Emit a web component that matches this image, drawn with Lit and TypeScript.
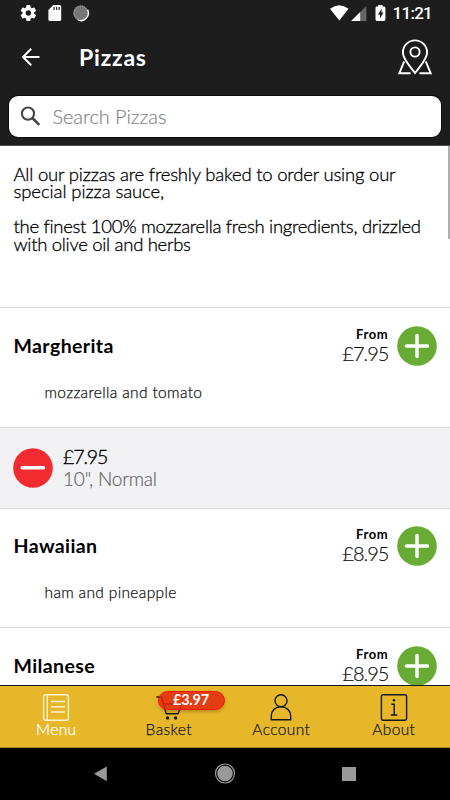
import { LitElement, html, css, svg } from "lit";
import { customElement, property } from "lit/decorators.js";

const plus = svg`<svg class="round" width="40" height="40" viewBox="0 0 40 40"><circle cx="20" cy="20" r="19.8" fill="#69ac35"/><path d="M9.5 20H30.5M20 9.5V30.5" stroke="#fff" stroke-width="3.4" stroke-linecap="round"/></svg>`;
const minus = svg`<svg class="round" width="40" height="40" viewBox="0 0 40 40"><circle cx="20" cy="20" r="19.8" fill="#f22b30"/><path d="M9.3 19.8H30.5" stroke="#fff" stroke-width="3.6" stroke-linecap="round"/></svg>`;

@customElement("status-bar")
class StatusBar extends LitElement {
  static styles = css`
    :host { display: flex; height: 28px; color: #fff; }
    svg { display: block; }
    .time { position: absolute; right: 18px; top: 3px; font: 500 17px/21px Roboto, sans-serif; letter-spacing: -0.75px; }
  `;
  render() {
    return html`
      <svg width="450" height="28" viewBox="0 0 450 28" fill="#fff">
        <g transform="translate(18.9 3.5) scale(.79)"><path d="M19.43 12.98c.04-.32.07-.64.07-.98s-.03-.66-.07-.98l2.11-1.65c.19-.15.24-.42.12-.64l-2-3.46c-.12-.22-.39-.3-.61-.22l-2.49 1c-.52-.4-1.08-.73-1.69-.98l-.38-2.65C14.46 2.18 14.25 2 14 2h-4c-.25 0-.46.18-.49.42l-.38 2.65c-.61.25-1.17.59-1.69.98l-2.49-1c-.23-.09-.49 0-.61.22l-2 3.46c-.13.22-.07.49.12.64l2.11 1.65c-.04.32-.07.65-.07.98s.03.66.07.98l-2.11 1.65c-.19.15-.24.42-.12.64l2 3.46c.12.22.39.3.61.22l2.49-1c.52.4 1.08.73 1.69.98l.38 2.65c.03.24.24.42.49.42h4c.25 0 .46-.18.49-.42l.38-2.65c.61-.25 1.17-.59 1.69-.98l2.49 1c.23.09.49 0 .61-.22l2-3.46c.12-.22.07-.49-.12-.64l-2.11-1.65zM12 15.5c-1.93 0-3.5-1.57-3.5-3.5s1.57-3.5 3.5-3.5 3.5 1.57 3.5 3.5-1.57 3.5-3.5 3.5z"/></g>
        <path d="M53.4 5H59.6Q61.2 5 61.2 6.6V19.4Q61.2 21 59.6 21H50Q48.4 21 48.4 19.4V10Z"/>
        <path d="M54 7v3M56.7 7v3M59.2 7v3" stroke="#1d1d1d" stroke-width="1.2"/>
        <circle cx="80.8" cy="13" r="7.5" fill="#777"/>
        <circle cx="80.8" cy="13" r="6.8" fill="none" stroke="#999" stroke-width="1.4" stroke-dasharray="1 1.2"/>
        <path d="M87.6 9.6A7.6 7.6 0 0 1 77.8 20" fill="none" stroke="#fff" stroke-width="1.3"/>
        <path d="M330 8.8Q339.3 1.6 348.6 8.8L339.3 20.6Z"/>
        <path d="M366.4 6V21H351.2Z" fill="#666"/><path d="M360.2 12V21H351.2Z"/>
        <path d="M378.2 5H382.6V6.6H384Q385.4 6.6 385.4 8V19.6Q385.4 21 384 21H377Q375.5 21 375.5 19.6V8Q375.5 6.6 377 6.6H378.2Z"/>
        <path d="M381.8 8.6L377.9 14.4H380V18.6L383.4 12.6H381.4Z" fill="#1d1d1d"/>
      </svg>
      <span class="time">11:21</span>`;
  }
}

@customElement("menu-item")
class MenuItem extends LitElement {
  @property() name = "";
  @property() price = "";
  @property() note = "";
  static styles = css`
    :host { display: block; box-sizing: border-box; height: 119.5px; flex: none; border-bottom: 1px solid #d9d9db; background: #fff; }
    .top { display: flex; align-items: center; padding: 17.7px 13px 0 13.5px; height: 40px; }
    .name { flex: 1; font-weight: 700; font-size: 19.5px; line-height: 24px; letter-spacing: 0.4px; }
    .cost { text-align: right; margin-right: 9px; display: flex; flex-direction: column; margin-top: -2px; }
    .from { font-weight: 700; font-size: 13px; line-height: 16px; letter-spacing: 0.65px; margin-right: -0.4px; }
    .price { font-weight: 300; font-size: 20px; line-height: 22px; letter-spacing: -1.1px; margin-right: -0.2px; color: #111; -webkit-text-stroke: 0.2px #111; }
    .note { padding: 16px 0 0 44.5px; font-weight: 300; font-size: 15.5px; line-height: 20px; letter-spacing: 0.35px; color: #111; -webkit-text-stroke: 0.25px #111; }
    .round { display: block; }
  `;
  render() {
    return html`<div class="top"><span class="name">${this.name}</span>
      <div class="cost"><span class="from">From</span><span class="price">${this.price}</span></div>${plus}</div>
      <div class="note">${this.note}</div>`;
  }
}

@customElement("app-root")
class AppRoot extends LitElement {
  static styles = css`
    :host { display: flex; flex-direction: column; position: relative; width: 450px; height: 800px; overflow: hidden; background: #fff; color: #000; font-family: Lato, "Open Sans", sans-serif; }
    svg { display: block; }
    header { height: 146px; flex: none; box-sizing: border-box; background: #1d1d1d; border-bottom: 1px solid #48484a; display: flex; flex-direction: column; }
    .bar { height: 68px; display: flex; align-items: center; padding: 0 18px 0 18px; box-sizing: border-box; }
    .title { flex: 1; margin-left: 36px; margin-top: -11px; color: #fff; font-weight: 700; font-size: 23px; line-height: 28px; letter-spacing: 0.8px; }
    .back { margin-top: -10px; }
    .pin { margin-top: -10px; }
    .search { height: 41px; margin: 0 9px 0 8.5px; background: #fff; border-radius: 9px; display: flex; align-items: center; box-shadow: 0 0 0 1px #0c0c0c; }
    .search svg { margin-left: 8px; margin-top: -1px; }
    .hint { margin-left: 12px; margin-top: -2px; color: #858585; font-weight: 300; font-size: 20px; line-height: 24px; letter-spacing: -0.08px; -webkit-text-stroke: 0.2px #858585; }
    main { flex: 1; min-height: 0; overflow: hidden; display: flex; flex-direction: column; position: relative; }
    .intro { flex: none; height: 162px; box-sizing: border-box; padding: 19.5px 0 0 13.5px; border-bottom: 1px solid #d9d9db; font-weight: 300; font-size: 18.5px; line-height: 17.5px; letter-spacing: -0.2px; white-space: nowrap; -webkit-text-stroke: 0.3px #000; }
    .intro p { margin: 0 0 17.5px; }
    .intro span { display: block; }
    .intro .tight { letter-spacing: -0.3px; }
    .intro .loose { letter-spacing: -0.1px; }
    .scroll { position: absolute; right: 0; top: 0; width: 2px; height: 93px; background: #b0b0b0; }
    .option { flex: none; height: 81px; box-sizing: border-box; border-bottom: 1px solid #d9d9db; background: #f2f2f4; display: flex; align-items: center; padding: 1px 0 0 13px; gap: 10px; }
    .lines { display: flex; flex-direction: column; font-weight: 300; font-size: 19.5px; line-height: 22px; }
    .amount { letter-spacing: -1.1px; -webkit-text-stroke: 0.35px #000; }
    .kind { color: #666; font-size: 19px; letter-spacing: -0.2px; -webkit-text-stroke: 0.2px #666; }
    .tabs { height: 63px; flex: none; box-sizing: border-box; border-top: 1px solid #101820; border-bottom: 1px solid #a98013; background: #e6b729; display: grid; grid-template-columns: repeat(4, 1fr); }
    .tab { display: flex; flex-direction: column; align-items: center; padding-top: 8px; position: relative; font-weight: 300; font-size: 15.5px; line-height: 17px; letter-spacing: 0.38px; color: #16191c; -webkit-text-stroke: 0.25px currentColor; }
    .tab svg { height: 27px; }
    .active { color: #fff; }
    .badge { position: absolute; left: 45px; top: 5px; width: 67px; height: 19px; box-sizing: border-box; border: 1px solid #e81c10; border-radius: 10px; background: rgba(230, 36, 13, 0.84); color: #fff; font-weight: 700; font-size: 14.5px; line-height: 16px; text-align: center; letter-spacing: -0.2px; -webkit-text-stroke: 0; box-shadow: 0 2px 3px rgba(120, 70, 0, 0.35); }
    nav { height: 52px; flex: none; background: #000; }
  `;
  render() {
    return html`
      <header>
        <status-bar></status-bar>
        <div class="bar">
          <svg class="back" width="25" height="24" viewBox="0 0 25 24" fill="none" stroke="#fff" stroke-width="2"><path d="M21.5 12H5M13.2 3.8L5 12L13.2 20.2"/></svg>
          <span class="title">Pizzas</span>
          <svg class="pin" width="34" height="36" viewBox="0 0 34 36" fill="none" stroke="#fff" stroke-width="1.9"><path d="M17 34C13 28.5 4.9 20.4 4.9 13.5A12.1 12.1 0 0 1 29.1 13.5C29.1 20.4 21 28.5 17 34Z"/><circle cx="17" cy="13" r="4.6"/><path d="M6.2 22.4L1.4 34.2H12.6M27.8 22.4L32.6 34.2H21.4"/></svg>
        </div>
        <div class="search">
          <svg width="24" height="24" viewBox="0 0 24 24" fill="none" stroke="#454545"><circle cx="11" cy="9.6" r="6.1" stroke-width="2.1"/><path d="M15.4 14L22.3 20.9" stroke-width="2.6"/></svg>
          <span class="hint">Search Pizzas</span>
        </div>
      </header>
      <main>
        <div class="intro">
          <p><span>All our pizzas are freshly baked to order using our</span><span class="loose">special pizza sauce,</span></p>
          <p><span class="tight">the finest 100% mozzarella fresh ingredients, drizzled</span><span class="tight">with olive oil and herbs</span></p>
        </div>
        <menu-item name="Margherita" price="£7.95" note="mozzarella and tomato"></menu-item>
        <div class="option">${minus}<div class="lines"><span class="amount">£7.95</span><span class="kind">10", Normal</span></div></div>
        <menu-item name="Hawaiian" price="£8.95" note="ham and pineapple"></menu-item>
        <menu-item name="Milanese" price="£8.95"></menu-item>
        <div class="scroll"></div>
      </main>
      <div class="tabs">
        <div class="tab active">
          <svg width="28" viewBox="0 0 28 27" fill="none" stroke="#fff3cf" stroke-width="1.4"><rect x="1.6" y=".8" width="24.8" height="25.4" rx="2"/><path d="M5.3 1V26M9 7.5H23M9 12.8H23M9 18H23"/></svg>
          <span>Menu</span>
        </div>
        <div class="tab">
          <svg width="26" viewBox="0 0 26 27" fill="none" stroke="#16191c" stroke-width="1.5"><path d="M.4 3H5.4L10.2 19.8H22L26 10M7.4 10H26"/><circle cx="11.6" cy="24" r="1.7" fill="#16191c" stroke="none"/><circle cx="19.6" cy="24" r="1.7" fill="#16191c" stroke="none"/></svg>
          <span>Basket</span>
          <span class="badge">£3.97</span>
        </div>
        <div class="tab">
          <svg width="22" viewBox="0 0 22 27" fill="none" stroke="#16191c" stroke-width="1.4"><circle cx="11" cy="6.8" r="6"/><path d="M1.3 25.7V22C1.3 16.6 5.4 12.8 11 12.8S20.7 16.6 20.7 22V25.7Z"/></svg>
          <span>Account</span>
        </div>
        <div class="tab">
          <svg width="28" viewBox="0 0 28 27" fill="none" stroke="#16191c" stroke-width="1.4"><rect x="1.4" y=".8" width="25.2" height="25.4" rx="1.6"/><path d="M11.4 10.3H14.2V20.8M10.8 21H17.2"/><circle cx="14" cy="6.3" r="1.2" fill="#16191c" stroke="none"/></svg>
          <span>About</span>
        </div>
      </div>
      <nav>
        <svg width="450" height="52" viewBox="0 0 450 52" fill="#999"><path d="M94 25.8L106.8 18.4V33.2Z"/><circle cx="225" cy="25.5" r="7.8"/><circle cx="225" cy="25.5" r="9.5" fill="none" stroke="#999" stroke-width="1.2"/><rect x="342" y="19" width="14" height="14"/></svg>
      </nav>`;
  }
}
